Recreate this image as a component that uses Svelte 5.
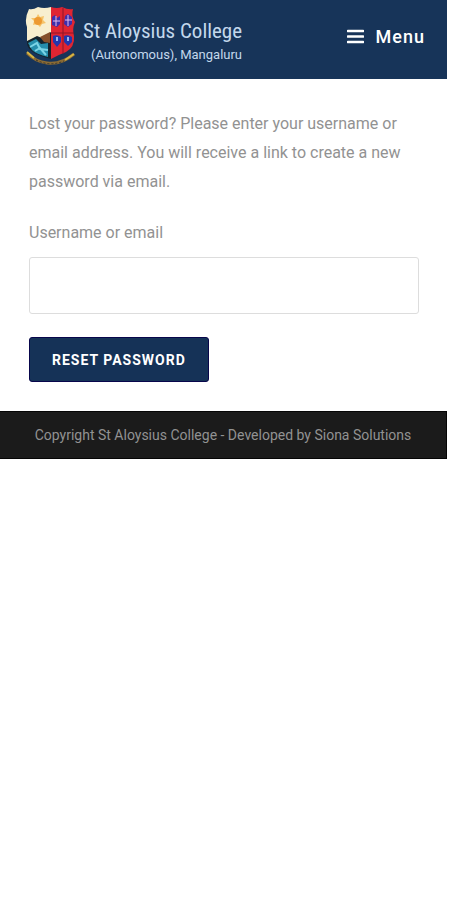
<script lang="ts">
	let username = $state('');
	let menuOpen = $state(false);
</script>

<div class="page">
	<header class="site-header">
		<a class="logo" href="#home" aria-label="St Aloysius College home">
			<svg class="crest" viewBox="0 0 52 62" aria-hidden="true">
				<!-- shield quarters -->
				<path d="M4 3Q8 4 13 1Q19 3 26 1V37H2V21Q-1 13 4 3Z" fill="#f8efcf" />
				<path d="M26 1Q32 3 37 1Q43 4 48 3Q46 10 50 16Q47 23 49 30Q50 41 41 46Q33 49 26 53Z" fill="#df2532" />
				<path d="M2 35L12 30L17 32L26 26V53Q14 50 8 46Q1 41 2 35Z" fill="#15242e" />
				<path d="M3 37L11 33L16 38L23 37V51Q11 48 7 44Z" fill="#258eac" />
				<path d="M15 31L25 26V37L19 36Z" fill="#85502b" />
				<path d="M5 41L12 37L15 43L23 44M10 45L15 42L21 49" fill="none" stroke="#7bd4e6" stroke-width="2" />
				<!-- sun -->
				<path d="M13 8L15 11L19 10L18 14L21 17L17 18L15 21L12 18L8 19L9 15L6 12L11 12Z" fill="#f6c46a" />
				<circle cx="13" cy="15" r="4" fill="#ed9a32" />
				<!-- arms -->
				<path d="M38 2V48M26 27H49" stroke="#8d1729" stroke-width="1" />
				<path d="M27 11L30 9L32 12L35 10V18L32 21L27 19ZM40 10L43 8L47 11V18L43 21L39 18Z" fill="#3d2fac" />
				<path d="M28 15H35M31 10V20M40 14H47M43 9V20" stroke="#e5bdec" stroke-width="1" />
				<path d="M28 30Q32 28 36 31V36L32 41L28 36ZM39 30Q43 28 47 31V36L43 40L39 36Z" fill="#2437ac" />
				<path d="M32 31V35M43 31V35" stroke="#9bb5ee" stroke-width="2" />
				<!-- motto ribbon -->
				<path d="M2 47Q11 56 22 57Q36 59 49 48" fill="none" stroke="#8a6b34" stroke-width="3" />
				<path d="M2 46L9 52M40 54L49 48" fill="none" stroke="#d6b544" stroke-width="2" />
				<path d="M11 54Q25 61 39 55" fill="none" stroke="#33332f" stroke-width="1" stroke-dasharray="2 2" />
			</svg>
			<span class="brand">
				<span class="brand-name">St Aloysius College</span>
				<span class="brand-place">(Autonomous), Mangaluru</span>
			</span>
		</a>
		<button class="menu-btn" type="button" aria-expanded={menuOpen} onclick={() => (menuOpen = !menuOpen)}>
			<svg class="menu-icon" viewBox="0 0 17 15" aria-hidden="true">
				<path d="M1 2H16M1 7.5H16M1 13H16" stroke="currentColor" stroke-width="2.6" stroke-linecap="round" />
			</svg>
			<span>Menu</span>
		</button>
	</header>

	<main class="content">
		<form onsubmit={(e) => e.preventDefault()}>
			<p class="intro">Lost your password? Please enter your username or email address. You will receive a link to create a new password via email.</p>
			<label class="field-label" for="user_login">Username or email</label>
			<input class="field" id="user_login" type="text" autocomplete="username" bind:value={username} />
			<button class="submit" type="submit">Reset password</button>
		</form>
	</main>

	<footer class="site-footer">Copyright St Aloysius College - Developed by Siona Solutions</footer>
</div>

<style>
	:global(body) { background: #fff; }
	.page { margin-right: 3px; font-family: Roboto, "Liberation Sans", sans-serif; color: #929292; }

	/* header */
	.site-header { display: flex; align-items: center; justify-content: space-between; height: 79px; box-sizing: border-box; padding: 0 22px 6px 25px; background: #173459; }
	.logo { display: flex; align-items: center; gap: 6px; color: #c3d8ec; text-decoration: none; white-space: nowrap; }
	.crest { width: 52px; height: 62px; flex: 0 0 auto; }
	.brand { display: flex; flex-direction: column; padding-top: 8px; }
	.brand-name { font-family: "Roboto Condensed", "Liberation Sans Narrow", "Liberation Sans", sans-serif; font-size: 21px; line-height: 28px; }
	.brand-place { font-size: 13px; line-height: 20px; padding-left: 8px; }
	.menu-btn { display: flex; align-items: center; gap: 12px; padding: 0; border: none; background: none; color: #fff; font-family: inherit; font-size: 18px; font-weight: 500; line-height: 24px; letter-spacing: 1px; cursor: pointer; }
	.menu-icon { width: 17px; height: 15px; }

	/* form */
	.content { padding: 30px 28px 29px 29px; }
	.intro { margin: 0 0 22px; font-size: 16px; line-height: 29px; }
	.field-label { display: block; font-size: 16px; line-height: 29px; margin-bottom: 10px; }
	.field { display: block; width: 100%; height: 57px; box-sizing: border-box; margin-bottom: 23px; padding: 6px 12px; border: 1px solid #ddd; border-radius: 3px; background: #fff; color: #333; font-family: inherit; font-size: 16px; outline: none; }
	.field:focus { border-color: #bbb; }
	.submit { display: block; height: 45px; padding: 0 22px; border: 1px solid #08064b; border-radius: 3px; background: #153257; color: #fff; font-family: inherit; font-size: 14px; font-weight: 700; letter-spacing: 1px; text-transform: uppercase; cursor: pointer; }

	.site-footer { padding: 12px 16px; border: 1px solid #050505; border-width: 1px 1px 1px 0; background: #1b1b1b; color: #929292; font-size: 14px; line-height: 22px; text-align: center; }
</style>
